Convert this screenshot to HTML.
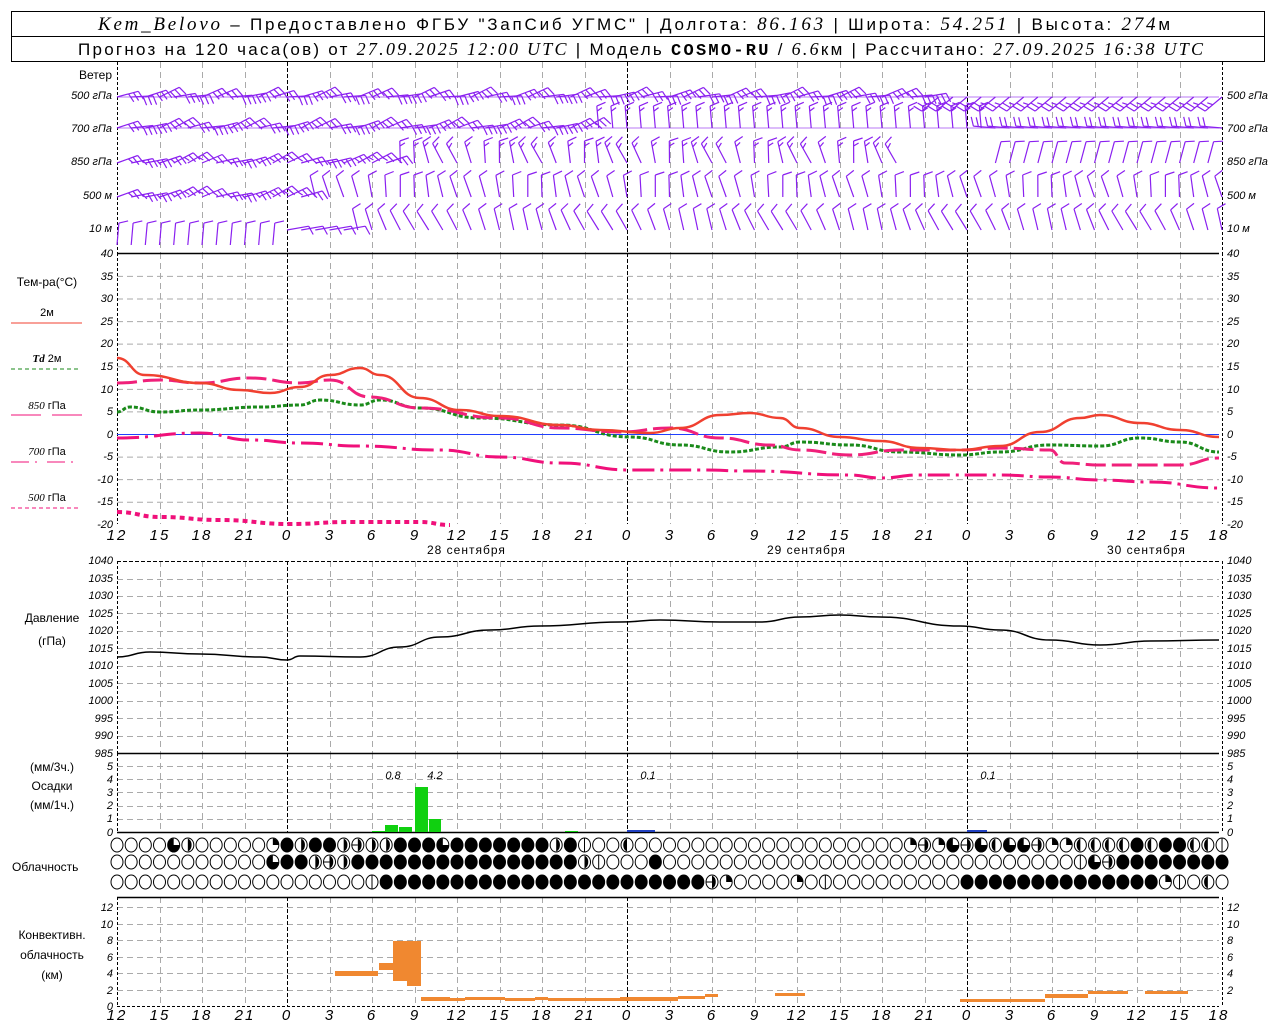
<!DOCTYPE html>
<html><head><meta charset="utf-8">
<style>
html,body{margin:0;padding:0;background:#fff;}
svg{display:block;font-family:"Liberation Sans",sans-serif;}
.t{font-size:11px;font-style:italic;fill:#000;}
.h{font-size:15px;font-style:italic;letter-spacing:2px;fill:#000;}
.lb{font-size:12px;fill:#000;}
.hd{font-size:17px;fill:#000;}
.it{font-style:italic;font-family:"Liberation Serif",serif;}
</style></head><body>
<svg id="s" width="1280" height="1024" viewBox="0 0 1280 1024" xmlns="http://www.w3.org/2000/svg">
<rect width="1280" height="1024" fill="#fff"/>
<rect x="11.5" y="11.5" width="1253" height="50" fill="none" stroke="#000"/>
<line x1="11" y1="36.5" x2="1265" y2="36.5" stroke="#000"/>
<text x="98" y="30" class="hd" textLength="1072" lengthAdjust="spacing"><tspan class="it" font-size="19">Kem_Belovo</tspan> – Предоставлено ФГБУ "ЗапСиб УГМС" | Долгота: <tspan class="it" font-size="19">86.163</tspan> | Широта: <tspan class="it" font-size="19">54.251</tspan> | Высота: <tspan class="it" font-size="19">274</tspan>м</text>
<text x="78" y="55" class="hd" font-size="16" textLength="1125" lengthAdjust="spacing">Прогноз на 120 часа(ов) от <tspan class="it" font-size="18">27.09.2025 12:00 UTC</tspan>  | Модель <tspan font-family="Liberation Mono" font-weight="bold">COSMO-RU</tspan> / <tspan class="it" font-size="18">6.6</tspan>км | Рассчитано: <tspan class="it" font-size="18">27.09.2025 16:38 UTC</tspan></text>
<g id="grid"></g>
<g id="data"></g>
<g class="t" text-anchor="end">
<text x="112" y="79" font-style="normal" font-size="12">Ветер</text>
<text x="112" y="99">500 гПа</text><text x="112" y="132">700 гПа</text><text x="112" y="165">850 гПа</text><text x="112" y="199">500 м</text><text x="112" y="232">10  м</text>
</g>
<g class="t">
<text x="1227" y="99">500 гПа</text><text x="1227" y="132">700 гПа</text><text x="1227" y="165">850 гПа</text><text x="1227" y="199">500 м</text><text x="1227" y="232">10  м</text>
</g>
<g class="t" text-anchor="end" font-size="10">
<text x="113" y="257">40</text><text x="113" y="280">35</text><text x="113" y="302">30</text><text x="113" y="325">25</text><text x="113" y="347">20</text><text x="113" y="370">15</text><text x="113" y="393">10</text><text x="113" y="415">5</text><text x="113" y="438">0</text><text x="113" y="460">-5</text><text x="113" y="483">-10</text><text x="113" y="505">-15</text><text x="113" y="528">-20</text>
</g>
<g class="t" font-size="10">
<text x="1227" y="257">40</text><text x="1227" y="280">35</text><text x="1227" y="302">30</text><text x="1227" y="325">25</text><text x="1227" y="347">20</text><text x="1227" y="370">15</text><text x="1227" y="393">10</text><text x="1227" y="415">5</text><text x="1227" y="438">0</text><text x="1227" y="460">-5</text><text x="1227" y="483">-10</text><text x="1227" y="505">-15</text><text x="1227" y="528">-20</text>
</g>
<g class="lb" text-anchor="middle">
<text x="47" y="286">Тем-ра(°C)</text>
<text x="47" y="316" font-size="11">2м</text>
<text x="47" y="362" font-size="11"><tspan class="it" font-weight="bold">Td</tspan>  2м</text>
<text x="47" y="409" font-size="11"><tspan class="it">850</tspan> гПа</text>
<text x="47" y="455" font-size="11"><tspan class="it">700</tspan> гПа</text>
<text x="47" y="501" font-size="11"><tspan class="it">500</tspan> гПа</text>
</g>
<line x1="11" y1="323" x2="82" y2="323" stroke="#f04030"/>
<line x1="11" y1="369" x2="79" y2="369" stroke="#1a8a1a" stroke-dasharray="4 3"/>
<line x1="11" y1="415" x2="41" y2="415" stroke="#f0107a"/><line x1="52" y1="415" x2="82" y2="415" stroke="#f0107a"/>
<line x1="11" y1="462" x2="79" y2="462" stroke="#f0107a" stroke-dasharray="18 6 2 10"/>
<line x1="11" y1="508" x2="79" y2="508" stroke="#f0107a" stroke-dasharray="4 3"/>
<g class="h" text-anchor="middle">
<text x="117" y="540">12</text><text x="160" y="540">15</text><text x="202" y="540">18</text><text x="245" y="540">21</text><text x="287" y="540">0</text><text x="330" y="540">3</text><text x="372" y="540">6</text><text x="415" y="540">9</text><text x="457" y="540">12</text><text x="500" y="540">15</text><text x="542" y="540">18</text><text x="585" y="540">21</text><text x="627" y="540">0</text><text x="670" y="540">3</text><text x="712" y="540">6</text><text x="755" y="540">9</text><text x="797" y="540">12</text><text x="840" y="540">15</text><text x="882" y="540">18</text><text x="925" y="540">21</text><text x="967" y="540">0</text><text x="1010" y="540">3</text><text x="1052" y="540">6</text><text x="1095" y="540">9</text><text x="1137" y="540">12</text><text x="1180" y="540">15</text><text x="1219" y="540">18</text>
</g>
<g class="h" text-anchor="middle">
<text x="117" y="1020">12</text><text x="160" y="1020">15</text><text x="202" y="1020">18</text><text x="245" y="1020">21</text><text x="287" y="1020">0</text><text x="330" y="1020">3</text><text x="372" y="1020">6</text><text x="415" y="1020">9</text><text x="457" y="1020">12</text><text x="500" y="1020">15</text><text x="542" y="1020">18</text><text x="585" y="1020">21</text><text x="627" y="1020">0</text><text x="670" y="1020">3</text><text x="712" y="1020">6</text><text x="755" y="1020">9</text><text x="797" y="1020">12</text><text x="840" y="1020">15</text><text x="882" y="1020">18</text><text x="925" y="1020">21</text><text x="967" y="1020">0</text><text x="1010" y="1020">3</text><text x="1052" y="1020">6</text><text x="1095" y="1020">9</text><text x="1137" y="1020">12</text><text x="1180" y="1020">15</text><text x="1219" y="1020">18</text>
</g>
<g class="lb" font-size="13" letter-spacing="1">
<text x="427" y="554">28 сентября</text><text x="767" y="554">29 сентября</text><text x="1107" y="554">30 сентября</text>
</g>
<g class="t" text-anchor="end" font-size="9">
<text x="113" y="564">1040</text><text x="113" y="582">1035</text><text x="113" y="599">1030</text><text x="113" y="617">1025</text><text x="113" y="634">1020</text><text x="113" y="652">1015</text><text x="113" y="669">1010</text><text x="113" y="687">1005</text><text x="113" y="704">1000</text><text x="113" y="722">995</text><text x="113" y="739">990</text><text x="113" y="757">985</text>
</g>
<g class="t" font-size="9">
<text x="1227" y="564">1040</text><text x="1227" y="582">1035</text><text x="1227" y="599">1030</text><text x="1227" y="617">1025</text><text x="1227" y="634">1020</text><text x="1227" y="652">1015</text><text x="1227" y="669">1010</text><text x="1227" y="687">1005</text><text x="1227" y="704">1000</text><text x="1227" y="722">995</text><text x="1227" y="739">990</text><text x="1227" y="757">985</text>
</g>
<g class="lb" text-anchor="middle"><text x="52" y="622">Давление</text><text x="52" y="645">(гПа)</text></g>
<g class="t" text-anchor="end" font-size="10">
<text x="113" y="770">5</text><text x="113" y="783">4</text><text x="113" y="796">3</text><text x="113" y="809">2</text><text x="113" y="822">1</text><text x="113" y="836">0</text>
</g>
<g class="t" font-size="10">
<text x="1227" y="770">5</text><text x="1227" y="783">4</text><text x="1227" y="796">3</text><text x="1227" y="809">2</text><text x="1227" y="822">1</text><text x="1227" y="836">0</text>
</g>
<g class="lb" text-anchor="middle"><text x="52" y="771">(мм/3ч.)</text><text x="52" y="790">Осадки</text><text x="52" y="809">(мм/1ч.)</text></g>
<g class="t" font-size="14" text-anchor="middle"><text x="393" y="779">0.8</text><text x="435" y="779">4.2</text><text x="648" y="779">0.1</text><text x="988" y="779">0.1</text></g>
<text x="12" y="871" class="lb">Облачность</text>
<g class="t" text-anchor="end" font-size="10">
<text x="113" y="911">12</text><text x="113" y="928">10</text><text x="113" y="944">8</text><text x="113" y="961">6</text><text x="113" y="977">4</text><text x="113" y="994">2</text><text x="113" y="1010">0</text>
</g>
<g class="t" font-size="10">
<text x="1227" y="911">12</text><text x="1227" y="928">10</text><text x="1227" y="944">8</text><text x="1227" y="961">6</text><text x="1227" y="977">4</text><text x="1227" y="994">2</text>
</g>
<g class="lb" text-anchor="middle"><text x="52" y="939">Конвективн.</text><text x="52" y="959">облачность</text><text x="52" y="979">(км)</text></g>
</svg>
<script>
(function(){
var NS="http://www.w3.org/2000/svg";
var G=document.getElementById("grid"),D=document.getElementById("data");
function el(p,n,a){var e=document.createElementNS(NS,n);for(var k in a)e.setAttribute(k,a[k]);p.appendChild(e);return e;}
function X(h){return 117+h*14.167;}
function ln(p,x1,y1,x2,y2,c,w,da){var a={x1:x1,y1:y1,x2:x2,y2:y2,stroke:c,"stroke-width":w||1};if(da)a["stroke-dasharray"]=da;return el(p,"line",a);}
var panels=[[62,253],[253,524],[561,753],[753,832],[897,1006]];
for(var v=-15;v<=35;v+=5)ln(G,117,434-v*4.517+.5,1219,434-v*4.517+.5,"#aaa",1,"6 4");
for(var p=990;p<=1035;p+=5){var y=Math.round(753-(p-985)*3.49)+.5;ln(G,117,y,1219,y,"#aaa",1,"6 4");}
for(var v=1;v<=5;v++){var y=Math.round(832-v*13.2)+.5;ln(G,117,y,1219,y,"#aaa",1,"6 4");}
for(var v=2;v<=12;v+=2){var y=Math.round(1006-v*8.25)+.5;ln(G,117,y,1219,y,"#aaa",1,"6 4");}
panels.forEach(function(pp){
 for(var i=0;i<=26;i++){var x=Math.round(X(i*3))+.5;var zero=(i%8==4);
  if(i==0||i==26)ln(G,x,pp[0],x,pp[1],"#000",1,"3 2");
  else if(zero)ln(G,x,pp[0],x,pp[1],"#000",1,"4 2");
  else ln(G,x,pp[0],x,pp[1],"#aaa",1,"6 4");}
});
ln(G,117,253.5,1219,253.5,"#000",1.5);
ln(G,117,561.5,1219,561.5,"#000",1,"4 2");
ln(G,117,753.5,1219,753.5,"#000",1.5);
ln(G,117,832.5,1219,832.5,"#000",1.5);
ln(G,117,897.5,1219,897.5,"#000",1.5);
ln(G,117,1006.5,1219,1006.5,"#000",1,"3 2");
ln(G,117,434.5,1219,434.5,"#2040ff",1);
function smooth(pts,c,w,da){var d="M"+pts[0][0]+","+pts[0][1];for(var i=1;i<pts.length;i++){var p0=pts[i-1],p1=pts[i];var mx=(p0[0]+p1[0])/2;d+=" C"+mx+","+p0[1]+" "+mx+","+p1[1]+" "+p1[0]+","+p1[1];}var a={d:d,fill:"none",stroke:c,"stroke-width":w};if(da)a["stroke-dasharray"]=da;el(D,"path",a);}
smooth([[117,512],[160,517],[220,520],[290,524],[350,522],[420,522],[450,525]],"#f0107a",4,"5 4");
smooth([[117,438],[200,433],[250,440],[300,443],[360,446],[440,450],[500,457],[560,463],[630,470],[700,470],[750,471],[850,475],[880,478],[920,475],[1000,475],[1050,477],[1100,480],[1150,482],[1219,488]],"#f0107a",3,"22 6 3 6");
smooth([[117,412],[130,407],[160,412],[200,410],[260,407],[300,405],[320,400],[360,405],[380,400],[420,408],[480,418],[560,425],[630,437],[680,445],[730,452],[780,447],[800,442],[850,445],[900,452],[960,455],[1000,452],[1050,445],[1100,446],[1140,438],[1180,442],[1219,452]],"#1a8a1a",3,"4 2");
smooth([[117,383],[160,380],[200,383],[250,378],[300,383],[330,380],[370,397],[420,408],[500,418],[560,428],[620,432],[670,428],[720,438],[770,445],[800,450],[850,455],[900,450],[960,450],[1000,448],[1050,450],[1065,463],[1100,465],[1180,465],[1219,458]],"#f0207a",3,"20 6");
smooth([[117,358],[145,375],[200,383],[240,390],[270,393],[300,387],[330,375],[360,368],[380,375],[420,398],[460,410],[500,416],[560,425],[600,430],[650,433],[680,428],[720,415],[750,413],[780,418],[800,428],[840,437],[880,441],[920,448],[960,450],[1000,446],[1040,432],[1080,418],[1100,415],[1140,423],[1180,430],[1219,437]],"#f04030",2.5);
smooth([[117,657],[150,652],[200,654],[260,657],[287,660],[300,656],[360,657],[400,647],[440,637],[490,630],[540,626],[620,622],[660,620],[720,622],[760,622],[800,617],[840,615],[880,617],[960,626],[1000,630],[1050,640],[1100,645],[1150,641],[1219,640]],"#000",1.5);
[[372,385,831],[385,398,825],[399,412,827],[415,428,787],[429,441,819],[565,578,831]].forEach(function(b){el(D,"rect",{x:b[0],y:b[2],width:b[1]-b[0],height:832-b[2],fill:"#10d010"});});
el(D,"rect",{x:627,y:830,width:28,height:2,fill:"#2040c0"});el(D,"rect",{x:967,y:830,width:20,height:2,fill:"#2040c0"});
[[335,378,971,976],[379,393,963,970],[393,407,941,981],[407,421,941,986],[421,450,997,1001],[450,465,998,1001],[465,505,997,1000],[505,535,998,1001],[535,548,997,1000],[548,620,998,1001],[620,678,997,1001],[678,705,996,999],[705,718,994,997],[775,805,993,996],[960,1045,999,1002],[1045,1088,994,998],[1088,1128,991,994],[1145,1188,991,994]].forEach(function(b){el(D,"rect",{x:b[0],y:b[2],width:b[1]-b[0],height:b[3]-b[2],fill:"#f08830"});});
var rows=[
"OOOOTROOOOOQFRFFRERRFFFTFFFFFFFRFVOOLOOOOOOOOOOOOOOOOOOOQEQTETLTTEQQLLLLFLFFLLV",
"OOOOOOOOOOOTFFRERFFFFFFFFFFFFFFFFRVOOOFOOOOOOOOOOOOOOOOOOOOOOOOOOOOOVTEFFFFFFFFF",
"OOOOOOOOOOOOOOOOOOVFFFFFFFFFFFFFFFFFFFFFFFEQOOOOQOVOOOOOOOOOFFFFFFFFFFFFFFQVOLOO"];
var ry=[845,862,882];
rows.forEach(function(r,ri){for(var i=0;i<79;i++){var c=r[i]||"O";var cx=X(i),cy=ry[ri],R=6.5;
 var g=el(D,"g",{});
 if(c=="F")el(g,"ellipse",{cx:cx,cy:cy,rx:R-.5,ry:R+.5,fill:"#000",stroke:"#000"});
 else{el(g,"ellipse",{cx:cx,cy:cy,rx:R-.5,ry:R+.5,fill:"#fff",stroke:"#000"});
  if(c=="L")el(g,"path",{d:"M"+cx+","+(cy-R)+" A"+(R-.5)+","+(R+.5)+" 0 0 0 "+cx+","+(cy+R)+"Z",fill:"#000"});
  if(c=="R")el(g,"path",{d:"M"+cx+","+(cy-R)+" A"+(R-.5)+","+(R+.5)+" 0 0 1 "+cx+","+(cy+R)+"Z",fill:"#000"});
  if(c=="Q")el(g,"path",{d:"M"+cx+","+cy+" L"+cx+","+(cy-R)+" A"+(R-.5)+","+(R+.5)+" 0 0 1 "+(cx+R-.5)+","+cy+"Z",fill:"#000"});
  if(c=="T")el(g,"path",{d:"M"+cx+","+cy+" L"+cx+","+(cy-R)+" A"+(R-.5)+","+(R+.5)+" 0 1 0 "+(cx+R-.5)+","+cy+"Z",fill:"#000"});
  if(c=="V")ln(g,cx,cy-R,cx,cy+R,"#000",1);
  if(c=="E"){el(g,"path",{d:"M"+cx+","+(cy-R)+" A"+(R-.5)+","+(R+.5)+" 0 0 1 "+cx+","+(cy+R)+"Z",fill:"#000"});ln(g,cx-R,cy,cx,cy,"#000",1);}
 }}});
var WC="#8a20f0";
function barb(x,y,dir,spd){var L=22,r=dir*Math.PI/180,ux=Math.sin(r),uy=-Math.cos(r);var tx=x+ux*L,ty=y+uy*L;
 var d="M"+x.toFixed(1)+","+y.toFixed(1)+"L"+tx.toFixed(1)+","+ty.toFixed(1);
 var fx=-uy,fy=ux;var k=0;
 while(spd>0.01){var px=tx-ux*k*5,py=ty-uy*k*5;var len=spd>=1?9:5;
  d+="M"+px.toFixed(1)+","+py.toFixed(1)+"L"+(px+fx*len+ux*3).toFixed(1)+","+(py+fy*len+uy*3).toFixed(1);spd-=1;k++;}
 el(D,"path",{d:d,stroke:WC,"stroke-width":1.2,fill:"none"});}
function lev(y,step,fn){for(var h=0;h<=78;h+=step){var p=fn(h);if(p){var x=X(h);var r=p[0]*Math.PI/180;var ex=x+Math.sin(r)*22;if(ex<117||ex>1219)continue;barb(x,y+(p[2]||0),p[0],p[1]);}}}
lev(97,1,function(h){return h<58?[75+Math.sin(h*1.7)*12,3]:[230,2.5];});
lev(128,1,function(h){if(h<34)return[72+Math.sin(h*1.3)*12,3];if(h<62)return[355,1.5];return[275,2];});
lev(163,1,function(h){if(h<20)return[70+Math.sin(h)*10,2.5];if(h<56)return[345+Math.sin(h)*15,1.5];if(h<62)return null;return[15,1];});
lev(197,1,function(h){if(h<14)return[70+Math.sin(h)*10,2.5];return[350+Math.sin(h*.7)*10,1];});
lev(230,1,function(h){if(h<12)return[5,1,15];if(h<17)return[80,1];return[338+Math.sin(h*.5)*10,1];});
ln(D,117,97,1219,97,WC,1).setAttribute("opacity","0.6");
ln(D,117,128,1219,128,WC,1).setAttribute("opacity","0.6");
})();
</script>
</body></html>
